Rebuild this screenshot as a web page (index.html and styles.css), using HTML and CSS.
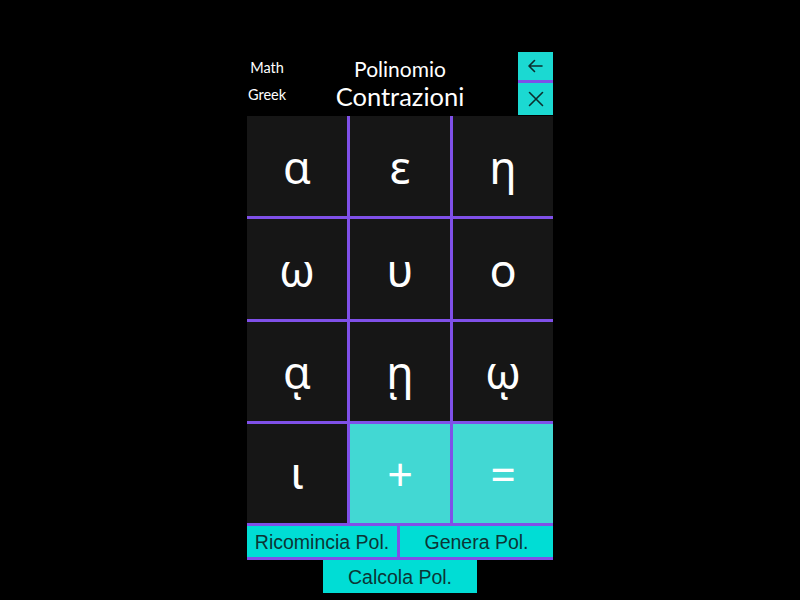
FILE: index.html
```html
<!DOCTYPE html>
<html lang="it">
<head>
<meta charset="utf-8">
<title>Polinomio Contrazioni</title>
<link rel="stylesheet" href="styles.css">
</head>
<body>
<div class="app">
  <header class="top">
    <div class="tags">
      <span class="tag">Math</span>
      <span class="tag">Greek</span>
    </div>
    <div class="title">
      <span class="t1">Polinomio</span>
      <span class="t2">Contrazioni</span>
    </div>
    <div class="actions">
      <button class="icon-btn back" aria-label="Indietro">
        <svg width="20" height="20" viewBox="0 0 20 20" fill="none" stroke="#0c2e2e" stroke-width="1.6" stroke-linecap="round" stroke-linejoin="round"><path d="M16 10H3.5M8.5 4.5L3 10l5.5 5.5"/></svg>
      </button>
      <button class="icon-btn close" aria-label="Chiudi">
        <svg width="20" height="20" viewBox="0 0 20 20" fill="none" stroke="#0c2e2e" stroke-width="1.6" stroke-linecap="round"><path d="M3.5 3.5l13 13M16.5 3.5l-13 13"/></svg>
      </button>
    </div>
  </header>
  <main class="pad">
    <button class="key">α</button>
    <button class="key">ε</button>
    <button class="key">η</button>
    <button class="key">ω</button>
    <button class="key">υ</button>
    <button class="key">ο</button>
    <button class="key">ᾳ</button>
    <button class="key">ῃ</button>
    <button class="key">ῳ</button>
    <button class="key iota">ι</button>
    <button class="key op">+</button>
    <button class="key op">=</button>
  </main>
  <div class="controls">
    <button class="ctl">Ricomincia Pol.</button>
    <button class="ctl">Genera Pol.</button>
  </div>
  <div class="calc-row">
    <button class="ctl calc">Calcola Pol.</button>
  </div>
</div>
</body>
</html>
```

FILE: styles.css
```css
html, body {
  margin: 0;
  padding: 0;
  background: #000;
  height: 100%;
}
body {
  font-family: "Lato", "Noto Sans", sans-serif;
  color: #fff;
}
button {
  font: inherit;
  border: 0;
  margin: 0;
  padding: 0;
  cursor: pointer;
}
.app {
  width: 306px;
  margin: 0 auto;
  padding-top: 52px;
}
.top {
  display: grid;
  grid-template-columns: 1fr auto 1fr;
  height: 63px;
  margin-bottom: 1px;
}
.tags {
  display: flex;
  flex-direction: column;
  align-items: center;
  width: 40px;
}
.tag {
  font-size: 14.5px;
  height: 30px;
  line-height: 32px;
}
.tag + .tag {
  line-height: 26px;
}
.title {
  display: flex;
  flex-direction: column;
  align-items: center;
}
.t1 {
  font-size: 21px;
  height: 30px;
  line-height: 34px;
}
.t2 {
  font-size: 25.5px;
  line-height: 28px;
}
.actions {
  justify-self: end;
  width: 35px;
  display: flex;
  flex-direction: column;
  gap: 3px;
  background: #7f50e8;
}
.icon-btn {
  background: #1bd9d2;
  display: flex;
  align-items: center;
  justify-content: center;
}
.back { height: 28px; }
.close { height: 32px; }
.pad {
  display: grid;
  grid-template-columns: repeat(3, 100px);
  grid-template-rows: 100px 100px 99px 99px;
  gap: 3px;
  background: #7f50e8;
}
.key {
  background: #161616;
  color: #fff;
  font-family: "Noto Sans", "DejaVu Sans", sans-serif;
  font-size: 45px;
  display: flex;
  align-items: center;
  justify-content: center;
}
.key.iota {
  font-family: Roboto, "Noto Sans", sans-serif;
  font-size: 45px;
}
.key.op {
  background: #42d8d3;
}
.controls {
  display: grid;
  grid-template-columns: 150px 1fr;
  gap: 3px;
  background: #7f50e8;
  padding: 3px 0;
}
.ctl {
  background: #00ddd5;
  color: #0c3535;
  font-family: "Liberation Sans", "Noto Sans", sans-serif;
  font-size: 19.5px;
  height: 31px;
  padding-top: 2px;
  display: flex;
  align-items: center;
  justify-content: center;
}
.calc-row {
  display: flex;
  justify-content: center;
}
.calc {
  width: 154px;
  height: 33px;
}
```
